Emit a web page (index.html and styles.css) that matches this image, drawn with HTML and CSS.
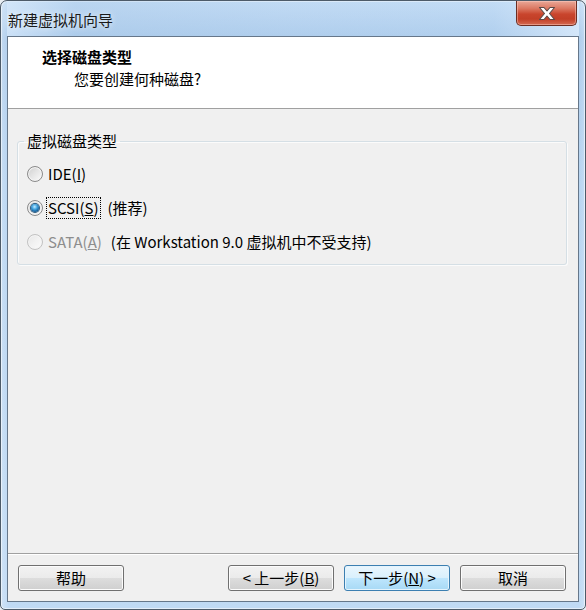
FILE: index.html
```html
<!DOCTYPE html>
<html lang="zh-CN">
<head>
<meta charset="utf-8">
<title>新建虚拟机向导</title>
<link rel="stylesheet" href="styles.css">
</head>
<body>
<div class="window">
  <div class="titlebar">
    <div class="title">新建虚拟机向导</div>
    <div class="close">
      <svg width="20" height="15" viewBox="0 0 20 15">
        <path d="M2.5 1.5 H7 L10 5 L13 1.5 H17.5 L12.5 7.5 L17.5 13.5 H13 L10 10 L7 13.5 H2.5 L7.5 7.5 Z" fill="#ffffff" stroke="#5a4a48" stroke-width="1.1" stroke-linejoin="round"/>
      </svg>
    </div>
  </div>
  <div class="client">
    <div class="header">
      <div class="h-title">选择磁盘类型</div>
      <div class="h-sub">您要创建何种磁盘?</div>
    </div>
    <div class="main">
      <fieldset class="group">
        <legend class="group-label">虚拟磁盘类型</legend>
        <div class="opt">
          <span class="radio"></span>
          <span class="opt-text">IDE(<u>I</u>)</span>
        </div>
        <div class="opt">
          <span class="radio checked"></span>
          <span class="opt-text focus">SCSI(<u>S</u>)</span>
          <span class="note">(推荐)</span>
        </div>
        <div class="opt">
          <span class="radio disabled"></span>
          <span class="opt-text dim">SATA(<u>A</u>)</span>
          <span class="note">(在 Workstation 9.0 虚拟机中不受支持)</span>
        </div>
      </fieldset>
    </div>
    <div class="footer">
      <button class="btn">帮助</button>
      <div class="spacer"></div>
      <button class="btn">&lt; 上一步(<u>B</u>)</button>
      <button class="btn default">下一步(<u>N</u>) &gt;</button>
      <button class="btn">取消</button>
    </div>
  </div>
</div>
</body>
</html>
```

FILE: styles.css
```css
html, body {
  margin: 0;
  padding: 0;
  background: #e9eef3;
}
body {
  width: 586px;
  height: 610px;
  font-family: "Noto Sans CJK SC", "Noto Sans", sans-serif;
  font-size: 15px;
  color: #000;
}
.window {
  box-sizing: border-box;
  width: 586px;
  height: 610px;
  border: 1px solid #4d5b69;
  border-radius: 7px 7px 5px 5px;
  background:
    linear-gradient(90deg, rgba(255,255,255,0.25) 0, rgba(255,255,255,0) 8px, rgba(255,255,255,0) 578px, rgba(255,255,255,0.2) 100%),
    linear-gradient(180deg, #c6def6 0, #afcdec 6%, #b7d4f1 30%, #bad6f2 60%, #c0daf4 100%);
  box-shadow: inset 0 0 0 1px rgba(255,255,255,0.55);
  padding: 0 6px 7px 6px;
  display: flex;
  flex-direction: column;
}
.titlebar {
  height: 35px;
  display: flex;
  align-items: flex-start;
  padding-left: 1px;
  background: linear-gradient(90deg, rgba(215,233,251,0.7) 0, rgba(168,200,232,0.4) 12%, rgba(176,207,238,0.2) 50%, rgba(180,212,242,0.2) 85%, rgba(220,236,252,0.8) 100%);
}
.title {
  margin-top: 9px;
  line-height: 20px;
  color: #1a1a1a;
  text-shadow: 0 0 6px rgba(255,255,255,0.9);
  flex: 1;
}
.close {
  width: 61px;
  height: 25px;
  margin-right: 2px;
  box-sizing: border-box;
  border: 1px solid #6b2d22;
  border-top: none;
  border-radius: 0 0 5px 5px;
  background: linear-gradient(180deg, #e9a898 0, #dc7a64 30%, #c9452d 55%, #c23f27 75%, #d46a52 100%);
  box-shadow: inset 0 0 0 1px rgba(255,210,200,0.45);
  display: flex;
  align-items: center;
  justify-content: center;
}
.close svg {
  display: block;
  margin-top: 1px;
}
.client {
  flex: 1;
  border: 1px solid #66778a;
  background: #f0f0f0;
  display: flex;
  flex-direction: column;
}
.header {
  height: 72px;
  box-sizing: border-box;
  background: #ffffff;
  border-bottom: 1px solid #a0a0a0;
  padding: 10px 0 0 34px;
}
.h-title {
  font-weight: 700;
  line-height: 20px;
}
.h-sub {
  margin-top: 2px;
  margin-left: 32px;
  line-height: 20px;
}
.main {
  flex: 1;
  padding: 22px 11px 0 9px;
}
.group {
  margin: 0;
  padding: 6px 0 5px 9px;
  border: 1px solid #d5dfe5;
  border-radius: 3px;
  box-shadow: inset 1px 1px 0 #fbfbfb, 1px 1px 0 #fbfbfb;
  min-width: 0;
}
.group-label {
  padding: 0 3px;
  margin-left: -3px;
  line-height: 20px;
}
.opt {
  height: 34px;
  display: flex;
  align-items: center;
}
.radio {
  width: 16px;
  height: 16px;
  box-sizing: border-box;
  border-radius: 50%;
  border: 1px solid #8a8a8a;
  background: linear-gradient(135deg, #cfcfcf 0, #e4e4e4 45%, #fbfbfb 100%);
  box-shadow: inset 0 0 0 1px #f4f4f4;
  display: flex;
  align-items: center;
  justify-content: center;
  margin-right: 3px;
  flex: none;
}
.radio.checked::after {
  content: "";
  width: 8px;
  height: 8px;
  border-radius: 50%;
  background: radial-gradient(circle at 45% 35%, #c4ecff 0, #48a8e2 35%, #1b6aa6 65%, #0f3e66 100%);
  box-shadow: 0 0 0 1px #2a5a80;
}
.radio.disabled {
  border-color: #c2c2c2;
  background: linear-gradient(135deg, #e6e6e6 0, #f2f2f2 50%, #fbfbfb 100%);
}
.opt-text {
  line-height: 20px;
  padding: 0 1px;
  border: 1px solid transparent;
}
.opt-text.focus {
  border: 1px dotted #000;
}
.opt-text.dim {
  color: #8d8d8d;
}
.note {
  margin-left: 7px;
  line-height: 20px;
}
.footer {
  height: 48px;
  box-sizing: border-box;
  border-top: 1px solid #a0a0a0;
  box-shadow: inset 0 1px 0 #ffffff;
  padding: 11px 12px 0 10px;
  display: flex;
  align-items: flex-start;
  gap: 10px;
}
.spacer {
  flex: 1;
  margin-left: -10px;
}
.btn {
  width: 106px;
  height: 26px;
  box-sizing: border-box;
  margin: 0;
  padding: 0;
  border: 1px solid #707070;
  border-radius: 3px;
  background: linear-gradient(180deg, #f2f2f2 0, #ebebeb 50%, #dddddd 51%, #cfcfcf 100%);
  box-shadow: inset 0 0 0 1px #fcfcfc;
  font-family: "Noto Sans CJK SC", "Noto Sans", sans-serif;
  font-size: 15px;
  line-height: 22px;
  color: #000;
}
.btn.default {
  border-color: #3c7fb1;
  background: linear-gradient(180deg, #eaf6fd 0, #d9f0fc 50%, #bee6fd 51%, #a7d9f5 100%);
  box-shadow: inset 0 0 0 1px #e4f4fd;
}
```
